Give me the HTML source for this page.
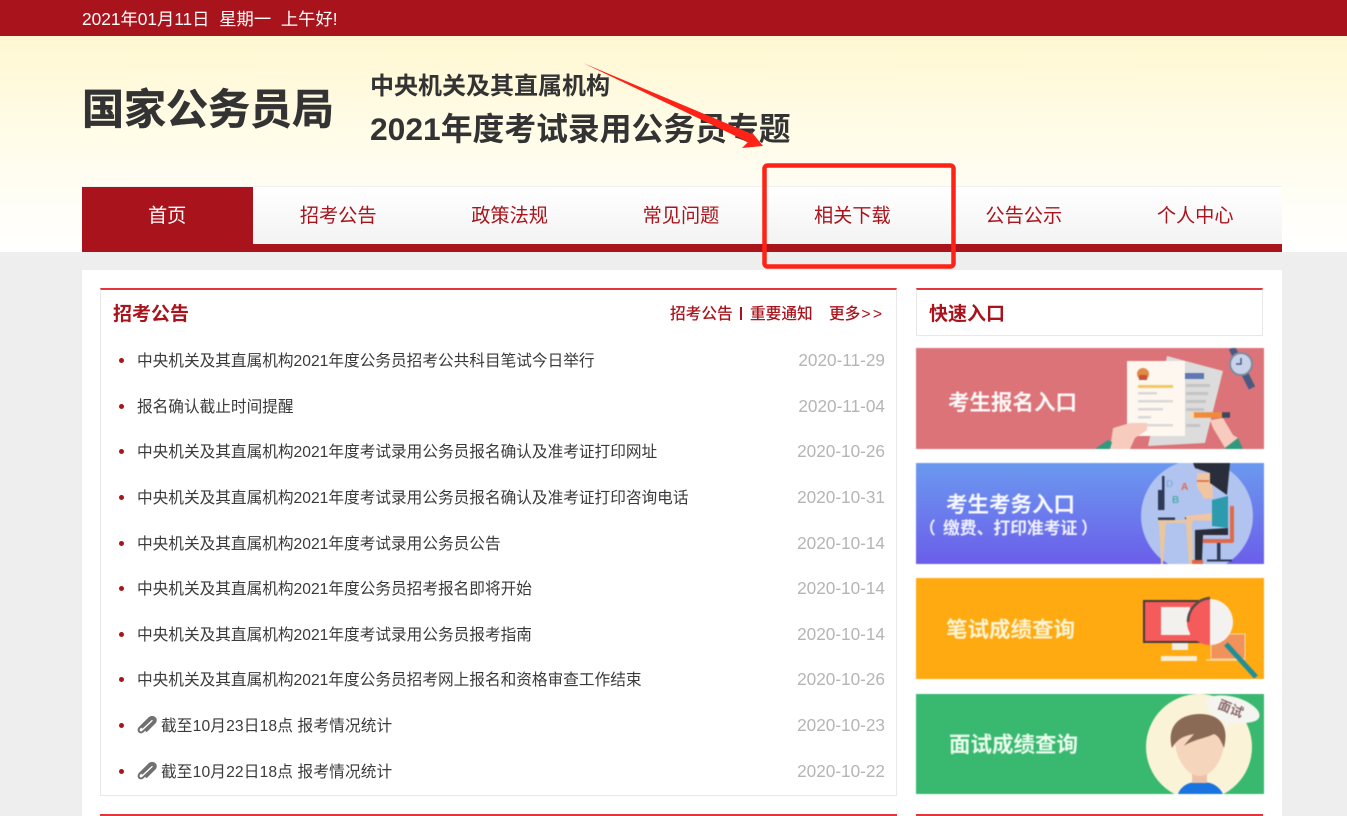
<!DOCTYPE html>
<html lang="zh-CN">
<head>
<meta charset="utf-8">
<title>国家公务员局</title>
<style>
*{margin:0;padding:0;box-sizing:border-box}
html,body{width:1347px;height:816px;overflow:hidden;background:#eeeeee;font-family:"Liberation Sans","Noto Sans CJK SC",sans-serif}
.a{position:absolute;white-space:nowrap}
#top{left:0;top:0;width:1347px;height:36px;background:#a9141c}
#head{left:0;top:36px;width:1347px;height:216px;background:linear-gradient(#fff8d2,#fffdf0 62%,#ffffff 100%)}
#nav{left:82px;top:186px;width:1200px;height:58px;background:linear-gradient(#ffffff,#f3f3f3);border-top:1px solid #f0f0f0}
#navbar{left:82px;top:244px;width:1200px;height:8px;background:#a9141c}
#home{left:82px;top:187px;width:171px;height:58px;background:#a9141c}
.n{top:189px;width:170.4px;height:57px;line-height:56px;text-align:center;font-size:19.2px;color:#a9141c}
#main{left:82px;top:270px;width:1200px;height:546px;background:#fff}
.panel{border:1px solid #e8e8e8;border-top:2px solid #e0363c;background:#fff}
.h{font-weight:700;font-size:19px;color:#a9141c;line-height:26px}
.r{height:24px;line-height:24px;font-size:15.67px;color:#3a3a3a;left:137px}
.d{height:24px;line-height:24px;font-size:17.2px;color:#b5b5b5;right:462px;text-align:right}
.b{left:119px;width:5px;height:5px;border-radius:50%;background:#a9141c}
.lk{height:24px;line-height:24px;font-size:15.7px;font-weight:500;color:#a9141c}
svg.ban{position:absolute;left:916px;width:348px;height:101px;filter:blur(.6px)}
svg text{font-family:"Liberation Sans","Noto Sans CJK SC",sans-serif}
</style>
</head>
<body>
<div class="a" id="top"></div>
<div class="a" style="left:82px;top:6px;height:26px;line-height:26px;font-size:17.3px;color:#fff;word-spacing:5px">2021年01月11日 星期一 上午好!</div>
<div class="a" id="head"></div>

<div class="a" style="left:82px;top:80px;height:60px;line-height:60px;font-size:42px;font-weight:700;color:#333;-webkit-text-stroke:.5px #333">国家公务员局</div>
<div class="a" style="left:370px;top:70px;height:34px;line-height:34px;font-size:24px;font-weight:700;color:#333">中央机关及其直属机构</div>
<div class="a" style="left:370px;top:106px;height:46px;line-height:46px;font-size:31.8px;font-weight:700;color:#333">2021年度考试录用公务员专题</div>

<div class="a" id="nav"></div>
<div class="a" id="navbar"></div>
<div class="a" id="home"></div>
<div class="a n" style="left:82px;color:#fff">首页</div>
<div class="a n" style="left:253px">招考公告</div>
<div class="a n" style="left:424.4px">政策法规</div>
<div class="a n" style="left:595.8px">常见问题</div>
<div class="a n" style="left:767.2px">相关下载</div>
<div class="a n" style="left:938.6px">公告公示</div>
<div class="a n" style="left:1110px">个人中心</div>

<div class="a" id="main"></div>

<div class="a panel" style="left:100px;top:288px;width:797px;height:508px"></div>
<div class="a h" style="left:113px;top:302px">招考公告</div>
<div class="a lk" style="left:670px;top:303px">招考公告</div>
<div class="a" style="left:740px;top:307px;width:2px;height:13px;background:#a9141c"></div>
<div class="a lk" style="left:750px;top:303px">重要通知</div>
<div class="a lk" style="left:829px;top:303px">更多<span style="letter-spacing:2.4px;margin-left:1px;font-weight:400">&gt;&gt;</span></div>

<div class="a b" style="top:358px"></div><div class="a r" style="top:350px">中央机关及其直属机构2021年度公务员招考公共科目笔试今日举行</div><div class="a d" style="top:348px">2020-11-29</div>
<div class="a b" style="top:404px"></div><div class="a r" style="top:396px">报名确认截止时间提醒</div><div class="a d" style="top:394px">2020-11-04</div>
<div class="a b" style="top:449px"></div><div class="a r" style="top:441px">中央机关及其直属机构2021年度考试录用公务员报名确认及准考证打印网址</div><div class="a d" style="top:439px">2020-10-26</div>
<div class="a b" style="top:495px"></div><div class="a r" style="top:487px">中央机关及其直属机构2021年度考试录用公务员报名确认及准考证打印咨询电话</div><div class="a d" style="top:485px">2020-10-31</div>
<div class="a b" style="top:541px"></div><div class="a r" style="top:533px">中央机关及其直属机构2021年度考试录用公务员公告</div><div class="a d" style="top:531px">2020-10-14</div>
<div class="a b" style="top:586px"></div><div class="a r" style="top:578px">中央机关及其直属机构2021年度公务员招考报名即将开始</div><div class="a d" style="top:576px">2020-10-14</div>
<div class="a b" style="top:632px"></div><div class="a r" style="top:624px">中央机关及其直属机构2021年度考试录用公务员报考指南</div><div class="a d" style="top:622px">2020-10-14</div>
<div class="a b" style="top:677px"></div><div class="a r" style="top:669px">中央机关及其直属机构2021年度公务员招考网上报名和资格审查工作结束</div><div class="a d" style="top:667px">2020-10-26</div>
<div class="a b" style="top:723px"></div>
<svg class="a" style="left:134px;top:713px" width="25" height="24" viewBox="0 0 21 20"><path d="M7 12 L14 5.500 C15.500 4 17.500 5.500 16 7.500 L7.500 15.500 C5.500 17.500 2.500 15 4.500 12.500 L13 4 C16 1.500 20 5 17.500 8 L10.500 15" fill="none" stroke="#707070" stroke-width="1.700" stroke-linecap="round"/></svg>
<div class="a r" style="top:715px;left:161px;letter-spacing:.14px">截至10月23日18点 报考情况统计</div><div class="a d" style="top:713px">2020-10-23</div>
<div class="a b" style="top:769px"></div>
<svg class="a" style="left:134px;top:759px" width="25" height="24" viewBox="0 0 21 20"><path d="M7 12 L14 5.500 C15.500 4 17.500 5.500 16 7.500 L7.500 15.500 C5.500 17.500 2.500 15 4.500 12.500 L13 4 C16 1.500 20 5 17.500 8 L10.500 15" fill="none" stroke="#707070" stroke-width="1.700" stroke-linecap="round"/></svg>
<div class="a r" style="top:761px;left:161px;letter-spacing:.14px">截至10月22日18点 报考情况统计</div><div class="a d" style="top:759px">2020-10-22</div>

<div class="a" style="left:100px;top:814px;width:797px;height:2px;background:#e0363c"></div>

<div class="a panel" style="left:916px;top:288px;width:347px;height:48px"></div>
<div class="a h" style="left:929px;top:302px">快速入口</div>

<svg class="ban" style="top:348px" viewBox="0 0 348 101">
<rect width="348" height="101" fill="#db7378"/>
<polygon points="251,8 307,23 289,95 232,98" fill="#dcdcdc"/>
<rect x="269" y="25" width="19" height="6" fill="#5f78b5"/>
<g fill="#c4c4c4"><rect x="270" y="36" width="24" height="3"/><rect x="270" y="44" width="22" height="3"/><rect x="270" y="52" width="20" height="3"/><rect x="270" y="60" width="18" height="3"/><rect x="270" y="76" width="14" height="3"/></g>
<rect x="211" y="13" width="58" height="75" fill="#fdf7ef"/>
<circle cx="227" cy="26" r="6" fill="#e08a45"/><rect x="223" y="27" width="8" height="5" fill="#c9503a"/>
<rect x="222" y="37" width="35" height="3" fill="#f4c766"/>
<g fill="#d9d9d9"><rect x="222" y="44" width="19" height="2.500"/><rect x="222" y="52" width="35" height="2.500"/><rect x="222" y="60" width="25" height="2.500"/><rect x="222" y="68" width="13" height="2.500"/><rect x="222" y="76" width="35" height="2.500"/></g>
<line x1="316" y1="0" x2="336" y2="40" stroke="#495a82" stroke-width="7"/>
<circle cx="325" cy="16" r="11" fill="#c8d3ea" stroke="#7f8a9e" stroke-width="2"/>
<path d="M325 10v6h-5" stroke="#4c5a80" stroke-width="1.500" fill="none"/>
<path d="M294 72 L307 70 L317 87 L322 90 L309 100 L297 80Z" fill="#f7cbbd"/>
<path d="M277 67h30" stroke="#f08b38" stroke-width="5.500"/><path d="M306 67h8" stroke="#3c4660" stroke-width="5.500"/><path d="M274 67h4" stroke="#f7d9b0" stroke-width="5.500"/>
<path d="M194 101 L197 80 L214 75 L231 75 L231 82 L219 90 L214 101Z" fill="#f7cbbd"/>
<path d="M179 101 L192 92 L196 94 L194 101Z" fill="#2f9a80"/>
<path d="M309 100 L322 90 L327 101 L309 101Z" fill="#2f9a80"/>
<text x="32" y="62" font-size="21.500" font-weight="700" fill="#fff" fill-opacity=".95">考生报名入口</text>
</svg>

<svg class="ban" style="top:463px" viewBox="0 0 348 101">
<defs><linearGradient id="g2" x1="0" y1="0" x2="0" y2="1"><stop offset="0" stop-color="#6b99ef"/><stop offset="1" stop-color="#6b5eea"/></linearGradient></defs>
<rect width="348" height="101" fill="url(#g2)"/>
<circle cx="281" cy="53" r="56" fill="#b1c3ef"/>
<rect x="246" y="13" width="2.500" height="34" fill="#2f3a58"/><rect x="242" y="27" width="4" height="20" fill="#2f3a58"/>
<rect x="242" y="54.500" width="17" height="2.500" fill="#2f3a58"/>
<rect x="242" y="57" width="35" height="3" fill="#e8c6a0"/>
<path d="M243 60h7l-3 41h-2Z" fill="#e8c6a0"/><path d="M270 60h6l1 41h-4Z" fill="#e8c6a0"/>
<rect x="269" y="54" width="9" height="2" fill="#2f3a58"/>
<path d="M269 53 L297 50 L297 58 L271 57Z" fill="#f1c4a2"/>
<path d="M281 10 L296 10 L297 35 L288 36 L285 30 L281 24Z" fill="#f1c4a2"/>
<path d="M277 0 H314 L311 32 L294 20 L294 10 L279 5Z" fill="#2a2e3a"/>
<path d="M281 18h12" stroke="#e0683c" stroke-width="1.500"/>
<path d="M296 37 L312 33 L312 65 L296 63Z" fill="#2b9bad"/>
<rect x="314" y="43" width="4" height="36" fill="#e0694a"/>
<rect x="287" y="76" width="30" height="4" fill="#e0694a"/>
<rect x="301" y="80" width="3.500" height="17" fill="#2f3a58"/><path d="M291 97.500h25" stroke="#2f3a58" stroke-width="2"/>
<path d="M279 67 L312 65 L312 72 L287 72 L286 97 L279 97Z" fill="#2a2d38"/>
<rect x="276" y="97" width="11" height="4" fill="#e0694a"/>
<g font-size="10" font-weight="700"><text x="250" y="24" fill="#8ab0e0">D</text><text x="265" y="27" fill="#e0694a">A</text><text x="256" y="40" fill="#4fb0a8">B</text></g>
<text x="30" y="49" font-size="21.500" font-weight="700" fill="#fff" fill-opacity=".95">考生考务入口</text>
<text x="3" y="71" font-size="16.800" font-weight="700" fill="#fff" fill-opacity=".9">（</text>
<text x="27" y="71" font-size="16.800" font-weight="700" fill="#fff" fill-opacity=".9">缴费、打印准考证</text>
<text x="165" y="71" font-size="16.800" font-weight="700" fill="#fff" fill-opacity=".9">）</text>
</svg>

<svg class="ban" style="top:578px" viewBox="0 0 348 101">
<rect width="348" height="101" fill="#feaa10"/>
<rect x="228" y="23" width="72" height="41" fill="#f65b5b" stroke="#443b3c" stroke-width="2"/>
<rect x="245" y="29" width="29" height="28" fill="#f3f1ee"/>
<rect x="256" y="65" width="16" height="7" fill="#f3eee2"/>
<rect x="245" y="78" width="36" height="5" fill="#f8efd8"/>
<rect x="295" y="56" width="34" height="25" fill="#f0925a" stroke="#f8d8a0" stroke-width="1"/>
<path d="M290 82h38" stroke="#f8d8a0" stroke-width="1.500"/>
<path d="M310 66 L340 99" stroke="#1f8f98" stroke-width="5"/>
<path d="M294 21 A23 23 0 0 0 294 67Z" fill="#f65b5b"/>
<path d="M294 21 A23 23 0 0 1 294 67Z" fill="#f4f2f0"/>
<path d="M294 20 A24 24 0 0 0 272 44" fill="none" stroke="#5b4a4a" stroke-width="2.500"/>
<text x="30" y="59" font-size="21.500" font-weight="700" fill="#fff8e0" fill-opacity=".95">笔试成绩查询</text>
</svg>

<svg class="ban" style="top:694px;height:100px" viewBox="0 0 348 100">
<rect width="348" height="100" fill="#38b96f"/>
<circle cx="283" cy="53" r="53" fill="#fbf3d8"/>
<path d="M262 100 C266 90 276 87 284 89 C292 87 302 90 307 100Z" fill="#1a74e0"/>
<rect x="276" y="75" width="15" height="14" fill="#eec1a6"/>
<path d="M259 40 C259 30 308 30 308 40 C310 62 298 82 284 82 C270 82 257 62 259 40Z" fill="#f6d5bd"/>
<path d="M256 54 C250 30 266 20 284 20 C302 20 314 30 308 54 C304 44 302 42 298 40 C290 44 276 46 268 52 C272 46 275 44 278 40 C268 42 262 44 256 54Z" fill="#8b6a55"/>
<path d="M290 7 C292 -1 320 -1 336 11 C346 18 346 26 336 28 C326 30 320 30 314 29 L311 35 L308 27 C298 24 289 16 290 7Z" fill="#f4f4f0"/>
<text x="0" y="0" font-size="13" font-weight="700" fill="#8a6a6a" transform="translate(301 14) rotate(22)">面试</text>
<text x="33" y="58" font-size="21.500" font-weight="700" fill="#f4fff4" fill-opacity=".95">面试成绩查询</text>
</svg>

<div class="a" style="left:916px;top:814px;width:347px;height:2px;background:#e0363c"></div>

<svg class="a" style="left:0;top:0;pointer-events:none" width="1347" height="816" viewBox="0 0 1347 816">
<polygon points="583,63 752,134 750,130 763,146 742,148 748,142" fill="#ff2216"/>
<rect x="764.500" y="165.500" width="189" height="101" rx="3" fill="none" stroke="#ff2216" stroke-width="4.500"/>
</svg>
</body>
</html>
